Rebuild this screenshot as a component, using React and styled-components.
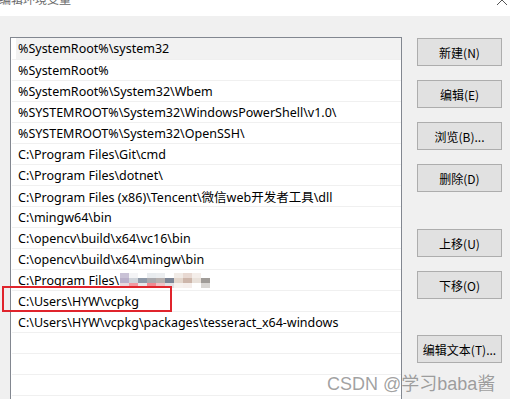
import React from 'react';
import styled, { createGlobalStyle } from 'styled-components';

const GlobalStyle = createGlobalStyle`
  html, body {
    margin: 0;
    padding: 0;
    background: #f0f0f0;
  }
  body {
    font-family: "Noto Sans", "Noto Sans CJK SC", sans-serif;
  }
`;

const paths = [
  '%SystemRoot%\\system32',
  '%SystemRoot%',
  '%SystemRoot%\\System32\\Wbem',
  '%SYSTEMROOT%\\System32\\WindowsPowerShell\\v1.0\\',
  '%SYSTEMROOT%\\System32\\OpenSSH\\',
  'C:\\Program Files\\Git\\cmd',
  'C:\\Program Files\\dotnet\\',
  'C:\\Program Files (x86)\\Tencent\\微信web开发者工具\\dll',
  'C:\\mingw64\\bin',
  'C:\\opencv\\build\\x64\\vc16\\bin',
  'C:\\opencv\\build\\x64\\mingw\\bin',
  'C:\\Program Files\\',
  'C:\\Users\\HYW\\vcpkg',
  'C:\\Users\\HYW\\vcpkg\\packages\\tesseract_x64-windows',
  '', '', '', ''
];

const buttons = [
  { label: '新建(N)' },
  { label: '编辑(E)' },
  { label: '浏览(B)...' },
  { label: '删除(D)' },
  { label: '上移(U)', extra: 23 },
  { label: '下移(O)' },
  { label: '编辑文本(T)...', extra: 22 },
];

// pixelated blur over the private part of the path
const mosaic = [
  ['#c9c2d6', '#f4f4f6', '#ffffff', '#e9ecef', '#eceef0', '#ffffff', '#f1ebe6', '#e8d9d2', '#f4eeea', '#ffffff'],
  ['#b9b0c9', '#cfd3d9', '#8e99a8', '#a9a9ad', '#b7b0ae', '#7c8595', '#e3d6cc', '#cdb6aa', '#e9e1da', '#a09c98'],
  ['#e8d8dc', '#f19aa2', '#e8e6e8', '#f08a92', '#efc2c6', '#e3e1e4', '#f6f1ee', '#f5eeeb', '#ffffff', '#d9d6d3'],
];

function Mosaic() {
  return (
    <svg width="90" height="15" viewBox="0 0 90 15" style={{ marginLeft: 1 }}>
      {mosaic.map((row, r) =>
        row.map((c, i) => (
          <rect key={r + '-' + i} x={i * 9} y={r * 5} width="9" height="5" fill={c} />
        ))
      )}
    </svg>
  );
}

export default function App() {
  return (
    <Page>
      <GlobalStyle />
      <TitleBar>
        <Title>编辑环境变量</Title>
        <CloseIcon width="12" height="12" viewBox="0 0 12 12">
          <path d="M1 1 L11 11 M11 1 L1 11" stroke="#555" strokeWidth="1" fill="none" />
        </CloseIcon>
      </TitleBar>
      <Body>
        <ListBox>
          {paths.map((p, i) => (
            <Row key={i} selected={i === 0} first={i === 0}>
              {i === 12 ? <Marked>{p}</Marked> : p}
              {i === 11 && <Mosaic />}
            </Row>
          ))}
        </ListBox>
        <ButtonColumn>
          {buttons.map((b) => (
            <Button key={b.label} extra={b.extra || 0}>{b.label}</Button>
          ))}
        </ButtonColumn>
      </Body>
      <Watermark>CSDN @学习baba酱</Watermark>
    </Page>
  );
}

const Page = styled.div`
  position: relative;
  width: 510px;
  height: 399px;
  overflow: hidden;
  background: #f0f0f0;
`;

const TitleBar = styled.div`
  height: 16px;
  background: #ffffff;
  display: flex;
  justify-content: space-between;
  align-items: flex-start;
  overflow: hidden;
`;

const Title = styled.span`
  font-family: "Noto Sans CJK SC", sans-serif;
  font-size: 12px;
  line-height: 12px;
  color: #6a6a6a;
  margin-top: -7px;
  margin-left: -1px;
`;

const CloseIcon = styled.svg`
  margin-top: -6px;
  margin-right: 2px;
`;

const Body = styled.div`
  display: flex;
  align-items: flex-start;
  padding: 21px 0 0 10px;
`;

const ListBox = styled.div`
  width: 392px;
  height: 400px;
  border: 1px solid #828790;
  background: #ffffff;
  padding: 0 0 0 1px;
  box-sizing: border-box;
  display: flex;
  flex-direction: column;
`;

const Row = styled.div`
  height: 21px;
  box-sizing: border-box;
  flex-shrink: 0;
  display: flex;
  align-items: center;
  margin-left: ${(p) => (p.selected ? '4px' : '0')};
  padding-left: ${(p) => (p.selected ? '2px' : '6px')};
  border-top: ${(p) => (p.first ? 'none' : '1px solid #f0f0f0')};
  background: ${(p) => (p.selected ? '#f2f2f2' : '#ffffff')};
  font-family: "Noto Sans", "Noto Sans CJK SC", sans-serif;
  font-size: 12.5px;
  color: #000000;
  white-space: nowrap;
`;

const Marked = styled.span`
  position: relative;
  &::after {
    content: '';
    position: absolute;
    left: -16px;
    top: -7px;
    width: 170px;
    height: 26px;
    box-sizing: border-box;
    border: 2px solid #e0242c;
  }
`;

const ButtonColumn = styled.div`
  display: flex;
  flex-direction: column;
  gap: 14px;
  margin-left: 15px;
  padding-top: 1px;
`;

const Button = styled.div`
  width: 85px;
  height: 28px;
  box-sizing: border-box;
  margin-top: ${(p) => p.extra}px;
  background: #e1e1e1;
  border: 1px solid #adadad;
  display: flex;
  align-items: center;
  justify-content: center;
  font-family: "Noto Sans CJK SC", sans-serif;
  font-size: 12px;
  color: #000000;
`;

const Watermark = styled.div`
  position: absolute;
  left: 327px;
  top: 369px;
  font-family: "Liberation Sans", "Noto Sans CJK SC", sans-serif;
  font-size: 18px;
  color: rgba(120, 120, 120, 0.7);
  white-space: nowrap;
`;
